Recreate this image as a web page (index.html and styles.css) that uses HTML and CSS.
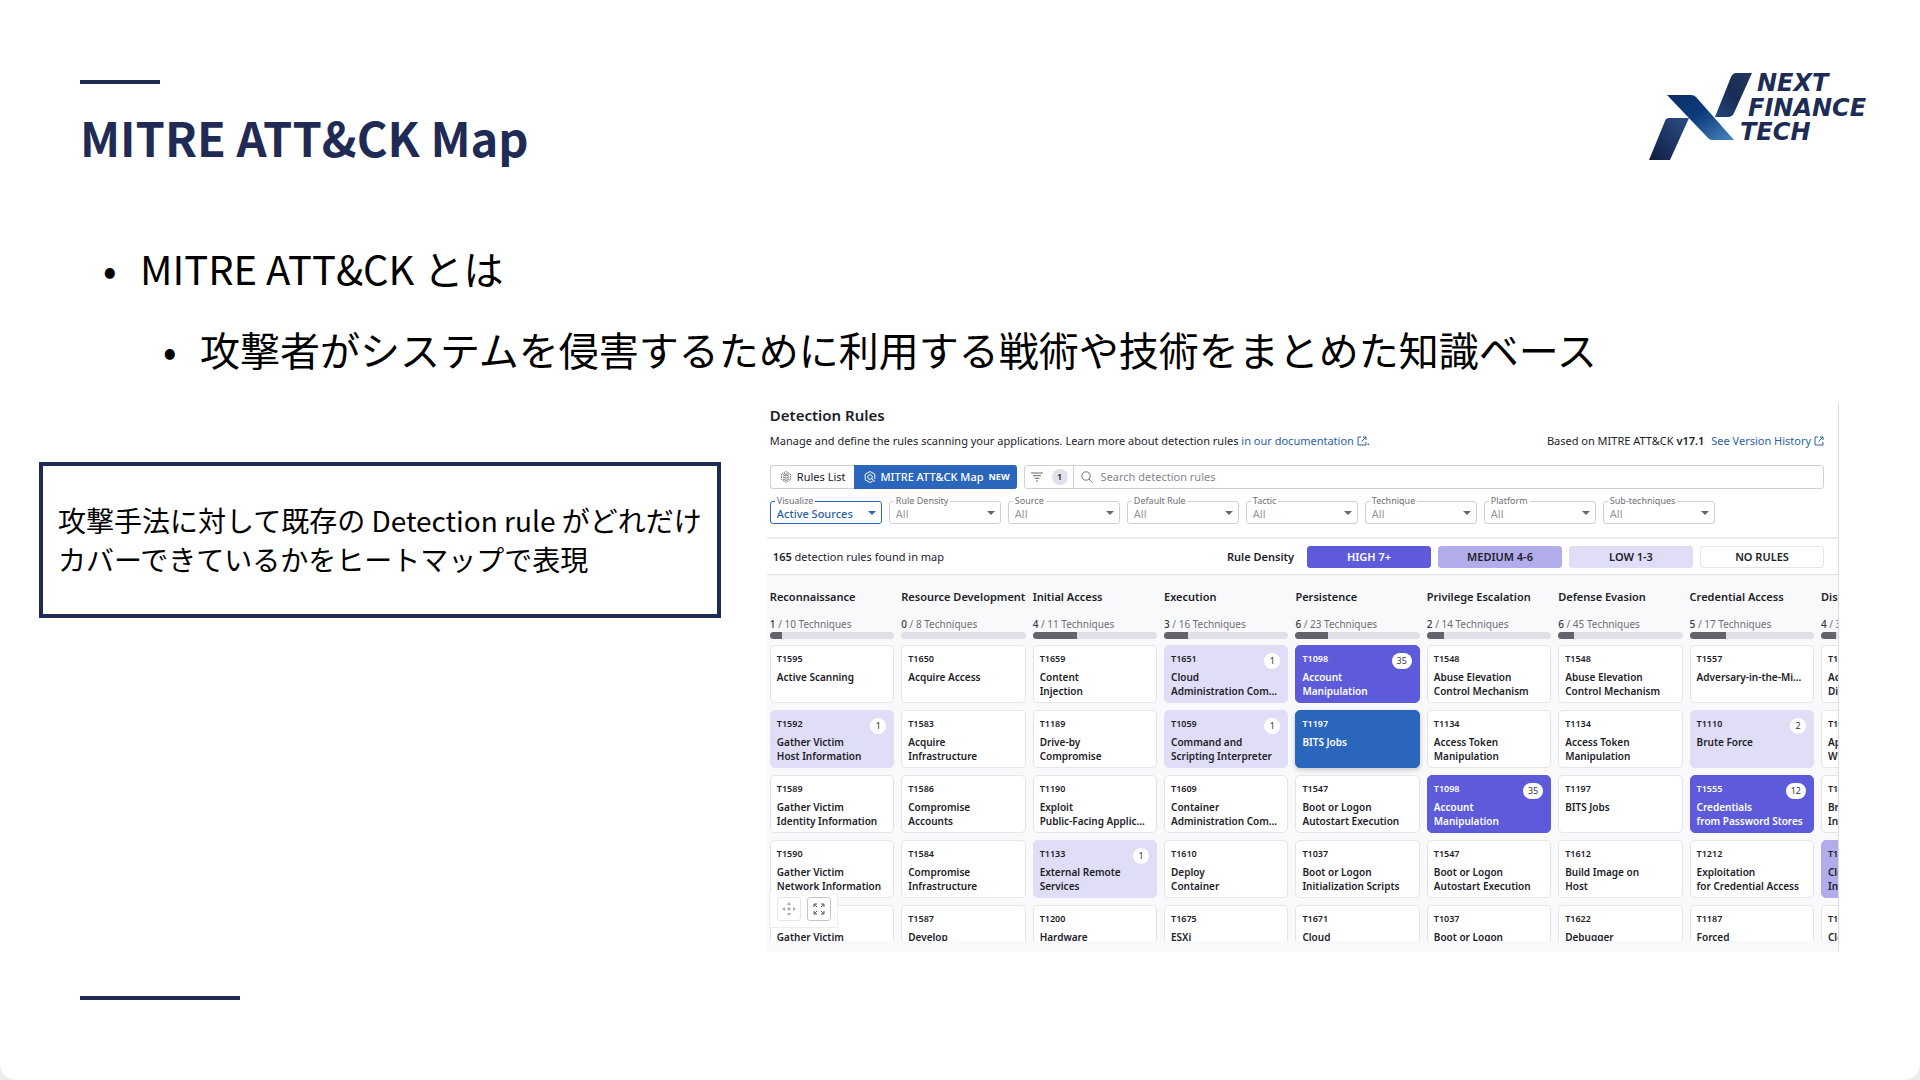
FILE: index.html
```html
<!DOCTYPE html>
<html lang="ja">
<head>
<meta charset="utf-8">
<meta name="viewport" content="width=device-width, initial-scale=1">
<title>MITRE ATT&amp;CK Map</title>
<link rel="stylesheet" href="styles.css">
</head>
<body>
<main class="slide">
  <header class="slide-head">
    <div>
      <div class="rule"></div>
      <h1 class="title">MITRE ATT&amp;CK Map</h1>
    </div>
    <svg class="logo" viewBox="0 0 220 92" role="img" aria-label="NEXT FINANCE TECH">
      <defs>
        <linearGradient id="g1" x1="0" y1="0" x2="1" y2="1"><stop offset="0" stop-color="#0a2c66"/><stop offset=".45" stop-color="#0c3b7c"/><stop offset="1" stop-color="#4a86bd"/></linearGradient>
        <linearGradient id="g2" x1="1" y1="0" x2="0" y2="1"><stop offset="0" stop-color="#23385f"/><stop offset=".5" stop-color="#182c55"/><stop offset="1" stop-color="#24477c"/></linearGradient>
        <linearGradient id="g3" x1="1" y1="0" x2="0" y2="1"><stop offset="0" stop-color="#2b4d84"/><stop offset="1" stop-color="#101f42"/></linearGradient>
      </defs>
      <path fill="url(#g3)" d="M21 46h20l-19 42H1L17 49q1-3 4-3z"/>
      <path fill="url(#g2)" d="M88 1h16L86 41q-2 4-6 4H67L83 5q2-4 5-4z"/>
      <path fill="url(#g1)" d="M19 23h24q3 0 5 2l38 43H64q-2 0-4-2z"/>
      <g class="logo-text">
        <text x="109" y="19">NEXT</text>
        <text x="100" y="44">FINANCE</text>
        <text x="92" y="68">TECH</text>
      </g>
    </svg>
  </header>

  <ul class="bullets">
    <li>MITRE ATT&amp;CK とは
      <ul><li>攻撃者がシステムを侵害するために利用する戦術や技術をまとめた知識ベース</li></ul>
    </li>
  </ul>

  <div class="content">
    <p class="callout">攻撃手法に対して既存の Detection rule がどれだけカバーできているかをヒートマップで表現</p>

    <section class="panel" lang="en">
      <div class="panel-top">
        <h2>Detection Rules</h2>
        <div class="intro">
          <p>Manage and define the rules scanning your applications. Learn more about detection rules <a href="#docs">in our documentation <svg class="ext" viewBox="0 0 10 10"><path d="M4 1H1v8h8V6M6 1h3v3M9 1 4.500 5.500"/></svg></a>.</p>
          <p>Based on MITRE ATT&amp;CK <b>v17.1</b> <a class="history" href="#history">See Version History <svg class="ext" viewBox="0 0 10 10"><path d="M4 1H1v8h8V6M6 1h3v3M9 1 4.500 5.500"/></svg></a></p>
        </div>
        <div class="toolbar">
          <div class="tabs">
            <button class="tab" type="button"><svg class="tab-icon thin" viewBox="0 0 12 12"><path d="M6 .5 10.500 3v5.500L6 11.500 1.500 8.500V3z" stroke-dasharray="1.500 .8"/><path d="m3 3.700 3 1.500 3-1.500M3 5.900l3 1.500 3-1.500M3 8l3 1.500L9 8M4 2.500l2 1 2-1"/></svg>Rules List</button>
            <button class="tab active" type="button"><svg class="tab-icon" viewBox="0 0 12 12"><path d="M9 10 6 11.500 1.200 8.800V3.200L6 .5l4.800 2.700V8"/><circle cx="6" cy="6" r="2.300"/><path d="m7.700 7.700 3.300 2.800"/></svg>MITRE ATT&amp;CK Map <small>NEW</small></button>
          </div>
          <div class="search">
            <button class="facets" type="button" aria-label="Filters, 1 active"><svg viewBox="0 0 12 10"><path d="M0 1h12M2 3.700h8M3.500 6.300h5M5 9h2"/></svg><span class="count">1</span></button>
            <svg class="glass" viewBox="0 0 12 12"><circle cx="5" cy="5" r="4.200"/><path d="m8 8 3.500 3.500"/></svg>
            <input type="search" aria-label="Search detection rules" placeholder="Search detection rules">
          </div>
        </div>
        <div class="filters" id="filters"></div>
      </div>
      <div class="summary">
        <p><b>165</b> detection rules found in map</p>
        <div class="legend">
          <b>Rule Density</b>
          <span class="key high">HIGH 7+</span>
          <span class="key medium">MEDIUM 4-6</span>
          <span class="key low">LOW 1-3</span>
          <span class="key">NO RULES</span>
        </div>
      </div>
      <div class="map">
        <div class="columns" id="columns"></div>
        <div class="zoomer">
          <button type="button" disabled aria-label="Recenter"><svg viewBox="0 0 14 14"><circle cx="7" cy="7" r="1.600"/><path d="M7 0 9 3H5zM7 14 5 11h4zM0 7l3-2v4zM14 7l-3 2V5z"/></svg></button>
          <button type="button" aria-label="Full screen"><svg class="lines" viewBox="0 0 14 14"><path d="M5 5 2 2M2 5V2h3M9 5l3-3M9 2h3v3M5 9l-3 3M2 9v3h3M9 9l3 3M12 9v3H9"/></svg></button>
        </div>
      </div>
    </section>
  </div>
  <div class="rule foot"></div>
</main>
<script src="map.js"></script>
</body>
</html>
```
FILE: map.js
```js
const filters = [["Visualize", "Active Sources"], ["Rule Density", "All"], ["Source", "All"], ["Default Rule", "All"],
  ["Tactic", "All"], ["Technique", "All"], ["Platform", "All"], ["Sub-techniques", "All"]];

document.getElementById("filters").innerHTML = filters.map(([label, value], i) => `
  <div class="filter${i === 0 ? " on" : ""}">
    <label for="f${i}">${label}</label>
    <select id="f${i}"><option>${value}</option></select>
  </div>`).join("");

// Each technique: id, name lines, rule count, density class
const tactics = [
  ["Reconnaissance", 1, 10, 10, [["T1595", "Active Scanning"], ["T1592", "Gather Victim|Host Information", 1, "low"], ["T1589", "Gather Victim|Identity Information"], ["T1590", "Gather Victim|Network Information"], ["T1591", "Gather Victim"]]],
  ["Resource Development", 0, 8, 0, [["T1650", "Acquire Access"], ["T1583", "Acquire|Infrastructure"], ["T1586", "Compromise|Accounts"], ["T1584", "Compromise|Infrastructure"], ["T1587", "Develop"]]],
  ["Initial Access", 4, 11, 36, [["T1659", "Content|Injection"], ["T1189", "Drive-by|Compromise"], ["T1190", "Exploit|Public-Facing Applic..."], ["T1133", "External Remote|Services", 1, "low"], ["T1200", "Hardware"]]],
  ["Execution", 3, 16, 19, [["T1651", "Cloud|Administration Com...", 1, "low"], ["T1059", "Command and|Scripting Interpreter", 1, "low"], ["T1609", "Container|Administration Com..."], ["T1610", "Deploy|Container"], ["T1675", "ESXi"]]],
  ["Persistence", 6, 23, 26, [["T1098", "Account|Manipulation", 35, "high"], ["T1197", "BITS Jobs", 0, "selected"], ["T1547", "Boot or Logon|Autostart Execution"], ["T1037", "Boot or Logon|Initialization Scripts"], ["T1671", "Cloud"]]],
  ["Privilege Escalation", 2, 14, 14, [["T1548", "Abuse Elevation|Control Mechanism"], ["T1134", "Access Token|Manipulation"], ["T1098", "Account|Manipulation", 35, "high"], ["T1547", "Boot or Logon|Autostart Execution"], ["T1037", "Boot or Logon"]]],
  ["Defense Evasion", 6, 45, 13, [["T1548", "Abuse Elevation|Control Mechanism"], ["T1134", "Access Token|Manipulation"], ["T1197", "BITS Jobs"], ["T1612", "Build Image on|Host"], ["T1622", "Debugger"]]],
  ["Credential Access", 5, 17, 29, [["T1557", "Adversary-in-the-Mi..."], ["T1110", "Brute Force", 2, "low"], ["T1555", "Credentials|from Password Stores", 12, "high"], ["T1212", "Exploitation|for Credential Access"], ["T1187", "Forced"]]],
  ["Discovery", 4, 33, 12, [["T1087", "Account|Discovery"], ["T1010", "Application|Window"], ["T1217", "Browser|Information"], ["T1580", "Cloud|Infrastructure", 0, "medium"], ["T1538", "Cloud"]]]
];

document.getElementById("columns").innerHTML = tactics.map(([name, used, total, pct, items]) => `
  <section class="tactic">
    <h3>${name}</h3>
    <p class="tally"><b>${used}</b> / ${total} Techniques</p>
    <div class="bar"><div class="fill" style="width:${pct}%"></div></div>
    ${items.map(([id, text, n, kind]) => `
    <article class="card ${kind || ""}">
      <span class="tid">${id}</span>${n ? `<span class="badge">${n}</span>` : ""}
      <p>${text.split("|").join("<br>")}</p>
    </article>`).join("")}
  </section>`).join("");
```
FILE: styles.css
```css
* { box-sizing: border-box; }
body { margin: 0; background: #ececec; color: #000; font-family: "Noto Sans CJK JP", sans-serif; }
h1, h2, h3, p, ul { margin: 0; padding: 0; font-weight: inherit; }
button, input, select { font: inherit; color: inherit; margin: 0; }

.slide { min-height: 100vh; display: flex; flex-direction: column; background: #fff; border-radius: 0 0 16px 16px; padding: 72px 52px 80px 39px; }
.slide-head { display: flex; justify-content: space-between; align-items: flex-start; padding-left: 41px; }
.rule { width: 80px; height: 4px; margin-top: 8px; background: #1f2a55; }
.rule.foot { width: 160px; margin: auto 0 0 41px; }
.title { margin-top: 16px; font-size: 47px; line-height: 74px; font-weight: 700; color: #1f2a55; }
.logo { width: 220px; height: 92px; flex: none; overflow: visible; }
.logo-text { font-family: "DejaVu Sans", sans-serif; font-size: 24px; font-weight: 700; font-style: italic; fill: #1d2c54; }

.bullets { margin-top: 62px; list-style: none; font-size: 40px; line-height: 64px; }
.bullets ul { list-style: none; margin-top: 17px; padding-left: 60px; }
.bullets li { padding-left: 101px; }
.bullets li li { padding-left: 0; }
.bullets li::before { content: "•"; display: inline-block; width: 37px; margin-left: -37px; line-height: 40px; }

.content { display: flex; align-items: flex-start; gap: 46px; margin-top: 22px; }
.callout { flex: 0 0 37.280%; margin-top: 59px; padding: 35px 0 35px 15px; border: 4px solid #1f2a55; font-size: 28px; line-height: 39px; }

.panel { flex: 1; min-width: 0; margin-right: 29px; border-right: 1px solid #dcdcdf; background: #fff; color: #1c2128; font-family: "Noto Sans", sans-serif; font-size: 11px; line-height: 16px; }
.panel b { font-weight: 600; }
.panel a { color: #2a5fa5; text-decoration: none; }
.panel-top { padding: 2px 14px 13px 3px; border-bottom: 2px solid #ebebee; }
h2 { font-size: 15px; line-height: 20px; font-weight: 600; }
.intro { display: flex; justify-content: space-between; margin-top: 8px; white-space: nowrap; }
.ext { width: 10px; height: 10px; vertical-align: -1px; fill: none; stroke: currentColor; stroke-width: 1; }
.history { margin-left: 4px; }
.toolbar { display: flex; gap: 7px; margin-top: 16px; height: 24px; }
.tabs { display: flex; }
.tab { display: flex; align-items: center; gap: 5px; padding: 0 8px 0 9px; border: 1px solid #d0d0d5; border-right: 0; border-radius: 3px 0 0 3px; background: #fff; white-space: nowrap; }
.tab.active { padding-right: 7px; background: #2a66bb; border-color: #2a66bb; color: #fff; border-radius: 0 3px 3px 0; font-weight: 500; }
.tab small { font-size: 9px; font-weight: 700; }
.tab-icon { width: 12px; height: 12px; fill: none; stroke: currentColor; stroke-width: 1; }
.tab-icon.thin { stroke: #3c3c42; stroke-width: .7; }
.search { flex: 1; display: flex; align-items: center; border: 1px solid #d0d0d5; border-radius: 3px; }
.facets { display: flex; align-items: center; gap: 9px; height: 100%; padding: 0 5px 0 6px; border: 0; border-right: 1px solid #d0d0d5; background: none; }
.facets svg { width: 12px; height: 10px; stroke: #666; stroke-width: 1; }
.count { width: 16px; height: 16px; border-radius: 8px; background: #e2e1e9; font-size: 9px; line-height: 16px; font-weight: 600; }
.glass { width: 12px; height: 12px; margin: 0 8px 0 7px; fill: none; stroke: #777; stroke-width: 1; }
.search input { flex: 1; min-width: 0; padding: 0; border: 0; outline: 0; background: none; }
.search input::placeholder { color: #85858c; }
.filters { display: flex; gap: 7px; margin-top: 12px; }
.filter { position: relative; flex: 0 0 112px; height: 23px; color: #96969b; }
.filter label { position: absolute; top: -6px; left: 5px; padding: 0 2px; background: #fff; font-size: 9px; line-height: 12px; color: #6e6e74; }
.filter select { width: 100%; height: 100%; appearance: none; padding: 2px 6px 0; border: 1px solid #d0d0d5; border-radius: 3px; background: none; line-height: 16px; }
.filter::after { content: ""; position: absolute; top: 10px; right: 6px; border: 4px solid transparent; border-top-color: #66666b; border-bottom: 0; pointer-events: none; }
.filter.on { color: #2a5fa5; font-weight: 500; }
.filter.on label { font-weight: 400; }
.filter.on select { border-color: #2a66bb; }
.filter.on::after { border-top-color: #2a66bb; }

.summary { display: flex; justify-content: space-between; align-items: center; height: 36px; padding: 0 14px 0 6px; border-bottom: 1px solid #e0e0e5; }
.legend { display: flex; align-items: center; gap: 7px; }
.legend > b { margin-right: 6px; }
.key { width: 124px; height: 22px; border: 1px solid #e4e4ea; border-radius: 3px; text-align: center; line-height: 20px; font-weight: 600; }

.map { position: relative; padding: 0 0 11px 3px; background: #f9f9fb; }
.columns { display: grid; grid-template-columns: repeat(9, calc((100% - 73px) / 8)); gap: 7px; height: 366px; overflow: hidden; }
.tactic h3 { margin-top: 14px; font-size: 11px; line-height: 16px; font-weight: 600; white-space: nowrap; }
.tally { margin-top: 12px; font-size: 10px; line-height: 14px; color: #6e6e74; white-space: nowrap; }
.tally b { color: #33363c; font-weight: 500; }
.bar { height: 7px; margin: 1px 0 6px; border-radius: 4px; background: #e0e0e8; overflow: hidden; }
.fill { height: 100%; background: #62636c; }
.card { position: relative; height: 58px; margin-bottom: 7px; padding: 6px 6px 0; border: 1px solid #e4e4ea; border-radius: 5px; background: #fff; font-size: 10px; line-height: 14px; font-weight: 600; white-space: nowrap; }
.tid { display: block; margin-bottom: 4px; font-size: 9px; }
.badge { position: absolute; top: 7px; right: 7px; min-width: 16px; padding: 0 5px; border-radius: 8px; background: #fff; color: #33363c; font-size: 9px; line-height: 16px; font-weight: 400; text-align: center; }
.low { background: #e0def6; border-color: #e0def6; }
.medium { background: #b1adea; border-color: #b1adea; }
.high { background: #5e5bda; border-color: #5e5bda; color: #fff; }
.selected { background: #2a66bb; border-color: #2a66bb; color: #fff; box-shadow: 0 2px 5px #0003; }
.zoomer { position: absolute; left: 2px; bottom: 24px; display: flex; gap: 6px; padding: 4px 6px 6px 7px; border: 1px solid #ededf0; border-top: 0; background: #fff; }
.zoomer button { width: 24px; height: 24px; display: grid; place-items: center; padding: 0; border: 1px solid #c4c4ca; border-radius: 3px; background: #fff; color: #55555b; }
.zoomer button:disabled { border-color: #e4e4ea; color: #a9a9ae; }
.zoomer svg { width: 14px; height: 14px; fill: currentColor; }
.zoomer .lines { fill: none; stroke: currentColor; stroke-width: 1; }
```
